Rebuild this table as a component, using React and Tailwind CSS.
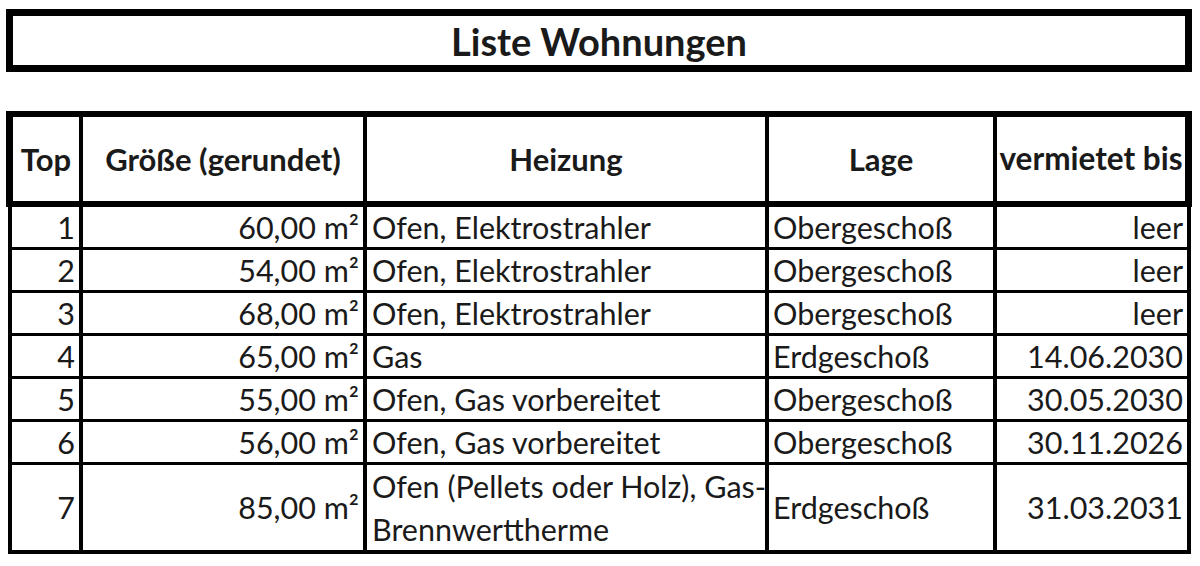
import React from "react";

const rows = [
  ["1", "60,00 m²", "Ofen, Elektrostrahler", "Obergeschoß", "leer"],
  ["2", "54,00 m²", "Ofen, Elektrostrahler", "Obergeschoß", "leer"],
  ["3", "68,00 m²", "Ofen, Elektrostrahler", "Obergeschoß", "leer"],
  ["4", "65,00 m²", "Gas", "Erdgeschoß", "14.06.2030"],
  ["5", "55,00 m²", "Ofen, Gas vorbereitet", "Obergeschoß", "30.05.2030"],
  ["6", "56,00 m²", "Ofen, Gas vorbereitet", "Obergeschoß", "30.11.2026"],
];

const font = { fontFamily: "Lato, 'Open Sans', sans-serif" };

export default function App() {
  return (
    <div className="w-[1200px] h-[566px] bg-white text-[#1a1a1a] overflow-hidden" style={font}>
      <div className="pt-[9px] pl-[6px]">
        <div className="w-[1186px] h-[63px] border-[7px] border-black flex items-center justify-center">
          <span className="text-[38px] font-bold leading-none">Liste Wohnungen</span>
        </div>
      </div>
      <div className="pt-[39px] pl-[6px]">
        {/* header */}
        <div className="w-[1186px] border-x-[7px] border-y-[6px] border-black bg-black grid grid-cols-[66px_280px_398px_224px_188px] gap-x-[4px] h-[96px]">
          <div className="bg-white flex items-center justify-center text-[31px] font-bold">Top</div>
          <div className="bg-white flex items-center justify-center text-[31px] font-bold">Größe (gerundet)</div>
          <div className="bg-white flex items-center justify-center text-[31px] font-bold">Heizung</div>
          <div className="bg-white flex items-center justify-center text-[31px] font-bold">Lage</div>
          <div className="bg-white flex items-center justify-center text-[31.5px] font-bold whitespace-nowrap">vermietet bis</div>
        </div>
        {/* body */}
        <div className="ml-[2px] w-[1183px] border-x-[4px] border-b-[4px] border-black bg-black grid grid-cols-[67px_280px_398px_224px_190px] grid-rows-[40px_40px_40px_40px_40px_40px_85px] gap-x-[4px] gap-y-[3px] text-[30.5px] leading-none">
          {rows.map((r) => (
            <React.Fragment key={r[0]}>
              <div className="bg-white flex items-center justify-end pr-[4px]">{r[0]}</div>
              <div className="bg-white flex items-center justify-end pr-[4px] whitespace-nowrap">{r[1]}</div>
              <div className="bg-white flex items-center pl-[5px] whitespace-nowrap">{r[2]}</div>
              <div className="bg-white flex items-center pl-[4px] whitespace-nowrap">{r[3]}</div>
              <div className="bg-white flex items-center justify-end pr-[4px] whitespace-nowrap">{r[4]}</div>
            </React.Fragment>
          ))}
          <div className="bg-white flex items-center justify-end pr-[4px]">7</div>
          <div className="bg-white flex items-center justify-end pr-[4px] whitespace-nowrap">85,00 m²</div>
          <div className="bg-white flex flex-col justify-center pl-[5px] leading-[43px] whitespace-nowrap">
            <span>Ofen (Pellets oder Holz), Gas-</span>
            <span>Brennwerttherme</span>
          </div>
          <div className="bg-white flex items-center pl-[4px] whitespace-nowrap">Erdgeschoß</div>
          <div className="bg-white flex items-center justify-end pr-[4px] whitespace-nowrap">31.03.2031</div>
        </div>
      </div>
    </div>
  );
}
